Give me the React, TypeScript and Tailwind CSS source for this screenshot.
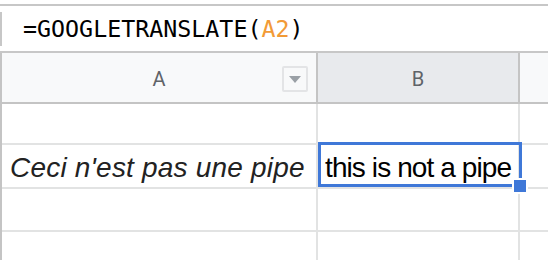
import React from "react";

export default function App() {
  return (
    <div className="relative w-[548px] h-[260px] overflow-hidden bg-white">
      {/* Formula bar */}
      <div className="h-[4px]" />
      <div className="h-[49px] border-t-2 border-b-2 border-[#c7c7c7] flex">
        <div className="mt-[6px] h-[34px] w-[2px] bg-[#c7c7c7]" />
        <div
          className="pl-[21px] flex items-center text-[23.3px] text-black leading-none"
          style={{ fontFamily: '"DejaVu Sans Mono", "Liberation Mono", monospace' }}
        >
          <span>=GOOGLETRANSLATE(</span>
          <span className="text-[#f29a36]">A2</span>
          <span>)</span>
        </div>
      </div>

      {/* Column header */}
      <div
        className="flex h-[51px] border-b-2 border-l-2 border-[#c4c4c4] bg-[#f8f9fa] text-[20px] text-[#5f6368]"
        style={{ fontFamily: 'Roboto, "Liberation Sans", sans-serif' }}
      >
        <div className="relative w-[316px] flex items-center justify-center border-r-2 border-[#c4c4c4]">
          <span className="pt-[3px]">A</span>
          <div className="absolute right-[8px] top-[13px] w-[26px] h-[26px] border-2 border-[#e3e4e6] rounded-[2px] flex items-center justify-center">
            <svg width="12" height="7" viewBox="0 0 12 7">
              <path d="M0 0 L12 0 L6 7 Z" fill="#9aa0a6" />
            </svg>
          </div>
        </div>
        <div className="w-[202px] flex items-center justify-center border-r-2 border-[#c4c4c4] bg-[#e8eaed]">
          <span className="pt-[3px]">B</span>
        </div>
        <div className="flex-1" />
      </div>

      {/* Rows */}
      <div
        className="border-l-2 border-[#c4c4c4]"
        style={{ fontFamily: '"Liberation Sans", Arial, sans-serif' }}
      >
        <div className="flex h-[41px] border-b-2 border-[#e2e3e3]">
          <div className="w-[316px] border-r-2 border-[#e2e3e3]" />
          <div className="w-[202px] border-r-2 border-[#e2e3e3]" />
        </div>
        <div className="flex h-[44px] border-b-2 border-[#e2e3e3] text-[28px] leading-none">
          <div className="w-[316px] border-r-2 border-[#e2e3e3] flex items-center pt-[4px] pl-[8px] italic text-[#222222] whitespace-nowrap tracking-[0.2px]">
            Ceci n'est pas une pipe
          </div>
          <div className="w-[202px] border-r-2 border-[#e2e3e3] flex items-center pt-[4px] pl-[7px] text-black whitespace-nowrap tracking-[-0.9px]">
            this is not a pipe
          </div>
        </div>
        <div className="flex h-[43px] border-b-2 border-[#e2e3e3]">
          <div className="w-[316px] border-r-2 border-[#e2e3e3]" />
          <div className="w-[202px] border-r-2 border-[#e2e3e3]" />
        </div>
        <div className="flex h-[40px]">
          <div className="w-[316px] border-r-2 border-[#e2e3e3]" />
          <div className="w-[202px] border-r-2 border-[#e2e3e3]" />
        </div>
      </div>

      {/* Selection */}
      <div className="absolute left-[318px] top-[142px] w-[204px] h-[45px] border-[3px] border-[#3f78d8]" />
      <div className="absolute left-[512px] top-[178px] w-[16px] h-[16px] bg-white p-[2px]">
        <div className="w-full h-full bg-[#3f78d8]" />
      </div>
    </div>
  );
}
